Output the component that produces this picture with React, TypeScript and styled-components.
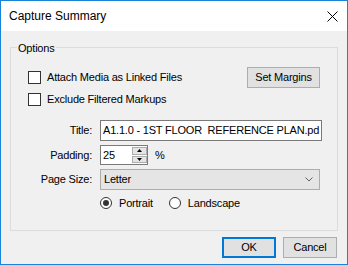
import styled, { createGlobalStyle } from "styled-components";

const GlobalStyle = createGlobalStyle`
  html, body {
    margin: 0;
    padding: 0;
    background: #ffffff;
  }
  body {
    font-family: "Liberation Sans", Arial, sans-serif;
  }
`;

const Window = styled.div`
  width: 348px;
  height: 265px;
  box-sizing: border-box;
  border: 1px solid #1883d7;
  display: flex;
  flex-direction: column;
  background: #f0f0f0;
  font-family: "Liberation Sans", Arial, sans-serif;
  font-size: 11px;
  letter-spacing: -0.2px;
  color: #000;
`;

const TitleBar = styled.div`
  height: 30px;
  flex: none;
  display: flex;
  align-items: center;
  justify-content: space-between;
  background: #ffffff;
  padding: 0 9px 0 8px;
`;

const TitleText = styled.span`
  font-size: 12px;
  line-height: 14px;
  letter-spacing: 0;
`;

const Body = styled.div`
  flex: 1;
  display: flex;
  flex-direction: column;
  padding: 16px 9px 0 9px;
`;

const GroupBox = styled.div`
  position: relative;
  height: 184px;
  box-sizing: border-box;
  border: 1px solid #dcdcdc;
  padding: 19px 17px 0 17px;
  display: flex;
  flex-direction: column;
`;

const GroupLegend = styled.span`
  position: absolute;
  top: -6px;
  left: 6px;
  padding: 0 1px;
  line-height: 13px;
  background: #f0f0f0;
`;

const Row = styled.div<{ $mt?: number; $h: number }>`
  display: flex;
  align-items: center;
  height: ${(p) => p.$h}px;
  margin-top: ${(p) => p.$mt ?? 0}px;
`;

// label/field rows run from the group's inner left edge
const FieldRow = styled(Row)`
  margin-left: -17px;
`;

const CheckItem = styled.label`
  display: flex;
  align-items: center;
  gap: 6px;
  line-height: 13px;
`;

const CheckBox = styled.span`
  width: 13px;
  height: 13px;
  box-sizing: border-box;
  border: 1px solid #333333;
  background: #ffffff;
  flex: none;
`;

const PushButton = styled.button<{ $w: number; $primary?: boolean }>`
  width: ${(p) => p.$w}px;
  height: 21px;
  box-sizing: border-box;
  margin: 0;
  padding: 0;
  background: #e1e1e1;
  border: ${(p) => (p.$primary ? "2px solid #0078d7" : "1px solid #adadad")};
  font-family: inherit;
  font-size: 11px;
  letter-spacing: -0.2px;
  color: #000;
  line-height: 13px;
`;

const MarginsButton = styled(PushButton)`
  margin-left: auto;
`;

const FieldLabel = styled.span`
  width: 81px;
  margin-right: 8px;
  text-align: right;
  line-height: 13px;
  flex: none;
`;

const TextBox = styled.div`
  width: 222px;
  height: 21px;
  box-sizing: border-box;
  border: 1px solid #7a7a7a;
  background: #ffffff;
  padding: 0 2px;
  display: flex;
  align-items: center;
  white-space: pre;
  line-height: 13px;
`;

const NumericBox = styled.div`
  width: 48px;
  height: 20px;
  box-sizing: border-box;
  border: 1px solid #7a7a7a;
  background: #ffffff;
  padding: 1px 0;
  display: flex;
`;

const NumericValue = styled.span`
  flex: 1;
  padding-left: 2px;
  display: flex;
  align-items: center;
  line-height: 13px;
`;

const Spinner = styled.div`
  width: 15px;
  display: flex;
  flex-direction: column;
  gap: 1px;
`;

const SpinHalf = styled.div`
  flex: 1;
  box-sizing: border-box;
  border: 1px solid #adadad;
  background: #e5e5e5;
  display: flex;
  align-items: center;
  justify-content: center;
`;

const Unit = styled.span`
  margin-left: 7px;
  line-height: 13px;
`;

const ComboBox = styled.div`
  width: 222px;
  height: 21px;
  box-sizing: border-box;
  border: 1px solid #acacac;
  background: #e5e5e5;
  padding: 0 6px 0 3px;
  display: flex;
  align-items: center;
  justify-content: space-between;
  line-height: 13px;
`;

const RadioGroup = styled.div`
  display: flex;
  align-items: center;
  margin-left: 72px;
  gap: 16px;
`;

const RadioItem = styled.label`
  display: flex;
  align-items: center;
  gap: 7px;
  line-height: 13px;
`;

const Radio = styled.span<{ $checked?: boolean }>`
  width: 12px;
  height: 12px;
  box-sizing: border-box;
  border-radius: 50%;
  border: 1px solid #333333;
  background: #ffffff;
  display: flex;
  align-items: center;
  justify-content: center;
  &::after {
    content: "";
    width: 6px;
    height: 6px;
    border-radius: 50%;
    background: ${(p) => (p.$checked ? "#333333" : "transparent")};
  }
`;

const Footer = styled.div`
  display: flex;
  justify-content: flex-end;
  gap: 7px;
  padding: 6px 1px 0 0;
`;

const CloseIcon = () => (
  <svg width="11" height="11" viewBox="0 0 11 11">
    <path d="M0.5 0.5 L10.5 10.5 M10.5 0.5 L0.5 10.5" stroke="#000" strokeWidth="1" />
  </svg>
);

const Arrow = ({ up }: { up?: boolean }) => (
  <svg width="5" height="3" viewBox="0 0 5 3">
    <path d={up ? "M2.5 0 L5 3 L0 3 Z" : "M0 0 L5 0 L2.5 3 Z"} fill="#000" />
  </svg>
);

const Chevron = () => (
  <svg width="8" height="5" viewBox="0 0 8 5">
    <path d="M0.5 0.5 L4 4 L7.5 0.5" fill="none" stroke="#606060" strokeWidth="1" />
  </svg>
);

const App = () => {
  return (
    <>
      <GlobalStyle />
      <Window>
        <TitleBar>
          <TitleText>Capture Summary</TitleText>
          <CloseIcon />
        </TitleBar>
        <Body>
          <GroupBox>
            <GroupLegend>Options</GroupLegend>
            <Row $h={21}>
              <CheckItem>
                <CheckBox />
                Attach Media as Linked Files
              </CheckItem>
              <MarginsButton $w={73}>Set Margins</MarginsButton>
            </Row>
            <Row $h={13} $mt={5}>
              <CheckItem>
                <CheckBox />
                Exclude Filtered Markups
              </CheckItem>
            </Row>
            <FieldRow $h={21} $mt={14}>
              <FieldLabel>Title:</FieldLabel>
              <TextBox>A1.1.0 - 1ST FLOOR  REFERENCE PLAN.pd</TextBox>
            </FieldRow>
            <FieldRow $h={20} $mt={4}>
              <FieldLabel>Padding:</FieldLabel>
              <NumericBox>
                <NumericValue>25</NumericValue>
                <Spinner>
                  <SpinHalf>
                    <Arrow up />
                  </SpinHalf>
                  <SpinHalf>
                    <Arrow />
                  </SpinHalf>
                </Spinner>
              </NumericBox>
              <Unit>%</Unit>
            </FieldRow>
            <FieldRow $h={21} $mt={4}>
              <FieldLabel>Page Size:</FieldLabel>
              <ComboBox>
                <span>Letter</span>
                <Chevron />
              </ComboBox>
            </FieldRow>
            <Row $h={12} $mt={7}>
              <RadioGroup>
                <RadioItem>
                  <Radio $checked />
                  Portrait
                </RadioItem>
                <RadioItem>
                  <Radio />
                  Landscape
                </RadioItem>
              </RadioGroup>
            </Row>
          </GroupBox>
          <Footer>
            <PushButton $w={54} $primary>
              OK
            </PushButton>
            <PushButton $w={54}>Cancel</PushButton>
          </Footer>
        </Body>
      </Window>
    </>
  );
};

export default App;
